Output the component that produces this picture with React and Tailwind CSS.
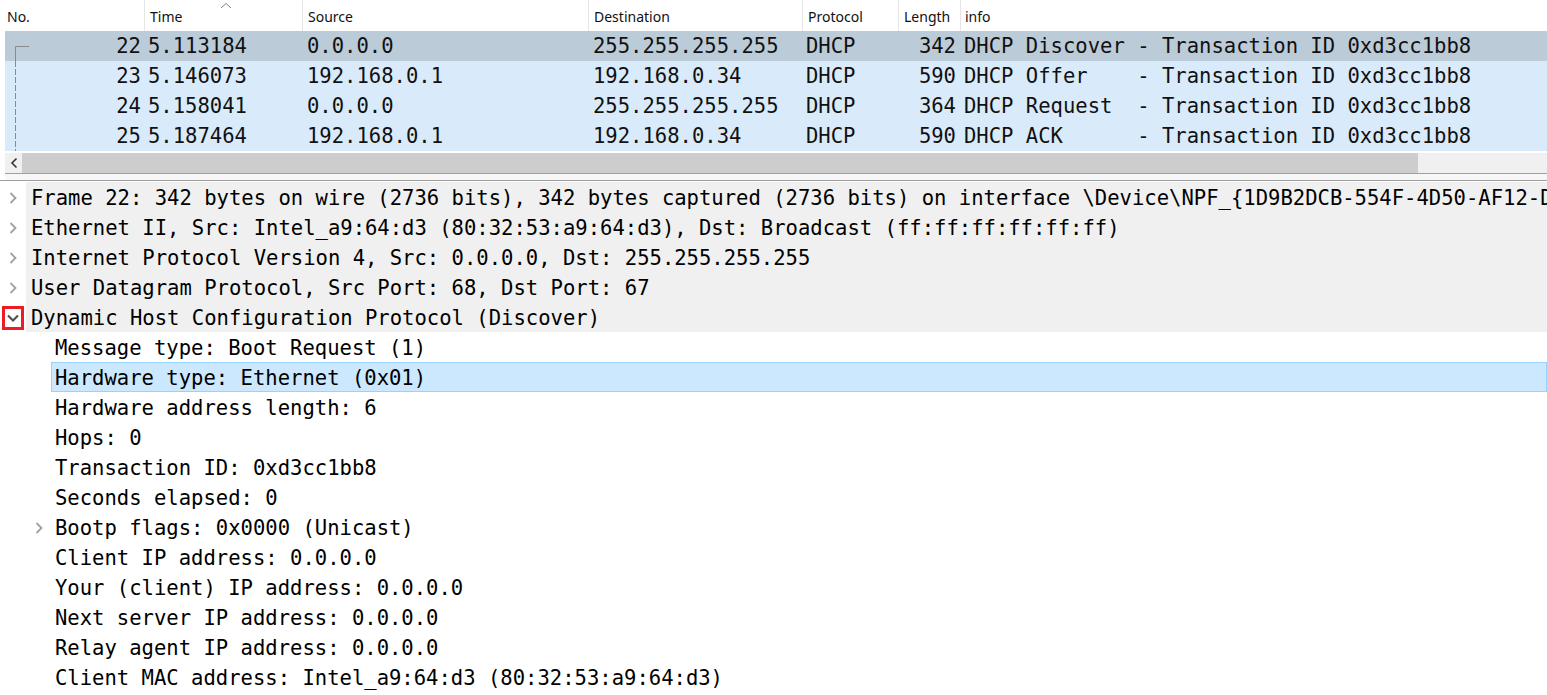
import React from "react";

const mono = { fontFamily: '"DejaVu Sans Mono", "Liberation Mono", monospace' };

const packets = [
  { no: "22", time: "5.113184", src: "0.0.0.0", dst: "255.255.255.255", proto: "DHCP", len: "342", info: "DHCP Discover - Transaction ID 0xd3cc1bb8", sel: true },
  { no: "23", time: "5.146073", src: "192.168.0.1", dst: "192.168.0.34", proto: "DHCP", len: "590", info: "DHCP Offer    - Transaction ID 0xd3cc1bb8" },
  { no: "24", time: "5.158041", src: "0.0.0.0", dst: "255.255.255.255", proto: "DHCP", len: "364", info: "DHCP Request  - Transaction ID 0xd3cc1bb8" },
  { no: "25", time: "5.187464", src: "192.168.0.1", dst: "192.168.0.34", proto: "DHCP", len: "590", info: "DHCP ACK      - Transaction ID 0xd3cc1bb8" },
];

const topLevel = [
  "Frame 22: 342 bytes on wire (2736 bits), 342 bytes captured (2736 bits) on interface \\Device\\NPF_{1D9B2DCB-554F-4D50-AF12-D",
  "Ethernet II, Src: Intel_a9:64:d3 (80:32:53:a9:64:d3), Dst: Broadcast (ff:ff:ff:ff:ff:ff)",
  "Internet Protocol Version 4, Src: 0.0.0.0, Dst: 255.255.255.255",
  "User Datagram Protocol, Src Port: 68, Dst Port: 67",
];

const children = [
  { t: "Message type: Boot Request (1)" },
  { t: "Hardware type: Ethernet (0x01)", sel: true },
  { t: "Hardware address length: 6" },
  { t: "Hops: 0" },
  { t: "Transaction ID: 0xd3cc1bb8" },
  { t: "Seconds elapsed: 0" },
  { t: "Bootp flags: 0x0000 (Unicast)", exp: true },
  { t: "Client IP address: 0.0.0.0" },
  { t: "Your (client) IP address: 0.0.0.0" },
  { t: "Next server IP address: 0.0.0.0" },
  { t: "Relay agent IP address: 0.0.0.0" },
  { t: "Client MAC address: Intel_a9:64:d3 (80:32:53:a9:64:d3)" },
];

function ChevRight() {
  return (
    <svg width="10" height="14" viewBox="0 0 10 14" className="shrink-0 mt-[2px]">
      <polyline points="2.5,2 7.5,7 2.5,12" fill="none" stroke="#a0a0a0" strokeWidth="1.8" />
    </svg>
  );
}

function ChevDown() {
  return (
    <svg width="14" height="10" viewBox="0 0 14 10">
      <polyline points="2,2.5 7,7.5 12,2.5" fill="none" stroke="#505050" strokeWidth="2.2" />
    </svg>
  );
}

export default function App() {
  const headerCell = "h-full flex items-center border-l border-[#e5e5e5]";
  return (
    <div className="w-[1547px] h-[695px] overflow-hidden bg-white text-black" style={{ fontFamily: '"Noto Sans", "Open Sans", sans-serif' }}>
      {/* column header */}
      <div className="h-[31px] flex pl-[5px] text-[14px] text-[#111] relative">
        <div className="w-[139px] h-full flex items-center pl-[2px] pt-[1px]">No.</div>
        <div className={`${headerCell} w-[158px] pl-[5px] pt-[1px] relative`}>
          Time
          <svg width="12" height="7" viewBox="0 0 12 7" className="absolute left-[75px] top-[2px]">
            <polyline points="1,6 6,1.5 11,6" fill="none" stroke="#808080" strokeWidth="1" />
          </svg>
        </div>
        <div className={`${headerCell} w-[286px] pl-[5px] pt-[1px]`}>Source</div>
        <div className={`${headerCell} w-[214px] pl-[5px] pt-[1px]`}>Destination</div>
        <div className={`${headerCell} w-[96px] pl-[5px] pt-[1px]`}>Protocol</div>
        <div className={`${headerCell} w-[62px] pl-[5px] pt-[1px]`}>Length</div>
        <div className={`${headerCell} flex-1 pl-[4px] pt-[1px]`}>info</div>
      </div>

      {/* packet list */}
      <div className="relative pl-[5px] text-[20.55px] text-[#111]" style={mono}>
        {packets.map((p) => (
          <div key={p.no} className={`h-[30px] flex items-center whitespace-pre ${p.sel ? "bg-[#bccbd8]" : "bg-[#d9ebfb]"}`}>
            <div className="w-[139px] text-right pr-[3px]">{p.no}</div>
            <div className="w-[158px] pl-[4px]">{p.time}</div>
            <div className="w-[286px] pl-[5px]">{p.src}</div>
            <div className="w-[214px] pl-[5px]">{p.dst}</div>
            <div className="w-[96px] pl-[4px]">{p.proto}</div>
            <div className="w-[62px] text-right pr-[4px]">{p.len}</div>
            <div className="flex-1 pl-[4px]">{p.info}</div>
          </div>
        ))}
        <svg width="20" height="120" viewBox="0 0 20 120" className="absolute left-[14px] top-0">
          <polyline points="1.5,30 1.5,15.5 15,15.5" fill="none" stroke="#8a8a8a" strokeWidth="1" />
          <line x1="1.5" y1="30" x2="1.5" y2="120" stroke="#8a8a8a" strokeWidth="1" strokeDasharray="6,2" />
        </svg>
      </div>

      {/* horizontal scrollbar */}
      <div className="h-[2px]" />
      <div className="ml-[5px] h-[20px] bg-[#f0f0f0] flex items-center">
        <div className="w-[17px] h-full flex items-center justify-center">
          <svg width="8" height="12" viewBox="0 0 8 12">
            <polyline points="6.5,1.5 2,6 6.5,10.5" fill="none" stroke="#333" strokeWidth="1.6" />
          </svg>
        </div>
        <div className="w-[1396px] h-full bg-[#cdcdcd]" />
      </div>
      <div className="ml-[5px] h-[1px] bg-[#a0a0a0]" />
      <div className="ml-[5px] h-[6px] bg-[#f7f7f7]" />
      <div className="h-[1px] bg-[#a0a0a0]" />

      {/* packet details */}
      <div className="text-[20.55px] whitespace-pre pt-[1px]" style={mono}>
        {topLevel.map((t) => (
          <div key={t} className="h-[30px] flex items-center">
            <div className="w-[26px] h-full flex items-center justify-center"><ChevRight /></div>
            <div className="flex-1 h-full bg-[#f0f0f0] flex items-center pl-[5px] pt-[3px] overflow-hidden">{t}</div>
          </div>
        ))}
        <div className="h-[30px] flex items-center">
          <div className="w-[26px] h-full flex items-center justify-center">
            <div className="w-[22px] h-[24px] mt-[2px] border-[3px] border-[#ed1c24] bg-white flex items-center justify-center">
              <ChevDown />
            </div>
          </div>
          <div className="flex-1 h-full bg-[#f0f0f0] flex items-center pl-[5px] pt-[3px]">Dynamic Host Configuration Protocol (Discover)</div>
        </div>
        {children.map((c) => (
          <div key={c.t} className="h-[30px] flex items-center">
            <div className="w-[51px] h-full flex items-center justify-end pr-[7px]">{c.exp ? <ChevRight /> : null}</div>
            <div className={`flex-1 h-full flex items-center pt-[3px] ${c.sel ? "bg-[#cce8ff] border border-[#99d1ff] pl-[3px]" : "pl-[4px]"}`}>{c.t}</div>
          </div>
        ))}
      </div>
    </div>
  );
}
